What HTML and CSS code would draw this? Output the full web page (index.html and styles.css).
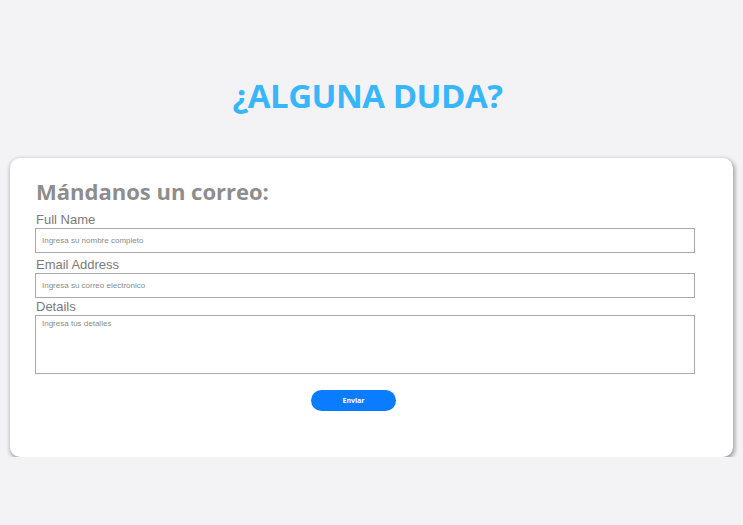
FILE: index.html
```html
<!DOCTYPE html>
<html lang="es">
<head>
<meta charset="utf-8">
<title>Contacto</title>
<link rel="stylesheet" href="styles.css">
</head>
<body>
<h1 class="title">¿ALGUNA DUDA?</h1>
<div class="card">
  <h2 class="card-title">Mándanos un correo:</h2>
  <form class="form">
    <label class="label">Full Name</label>
    <input class="field" type="text" placeholder="Ingresa su nombre completo">
    <label class="label">Email Address</label>
    <input class="field" type="text" placeholder="Ingresa su correo electronico">
    <label class="label label-tight">Details</label>
    <textarea class="field area" placeholder="Ingresa tus detalles"></textarea>
    <div class="actions"><button class="btn" type="button">Enviar</button></div>
  </form>
</div>
</body>
</html>
```

FILE: styles.css
```css
html, body { margin: 0; padding: 0; }
body {
  background: #f3f3f5;
  font-family: "Liberation Sans", Arial, sans-serif;
  padding: 1px 10px 0;
}
.title {
  margin: 73px 0 0;
  padding-right: 8px;
  text-align: center;
  font-family: "Open Sans", "Noto Sans", sans-serif;
  font-weight: 700;
  font-size: 33px;
  line-height: 44px;
  color: #38b6fb;
  letter-spacing: -0.5px;
}
.card {
  margin-top: 40px;
  background: #fff;
  border-radius: 10px;
  box-shadow: 1px 2px 4px 1px rgba(0,0,0,0.33);
  padding: 18px 38px 46px 25px;
}
.card-title {
  margin: 0 0 6px 1px;
  font-family: "Open Sans", "Noto Sans", sans-serif;
  font-weight: 700;
  font-size: 22px;
  line-height: 30px;
  color: #8d8d8d;
}
.form { display: flex; flex-direction: column; }
.label {
  font-size: 13px;
  line-height: 16px;
  color: #7a7a7a;
  margin-left: 1px;
}
.label-tight { margin-top: -3px; }
.field {
  box-sizing: border-box;
  width: 100%;
  height: 25px;
  margin: 0 0 4px;
  border: 1px solid #a9a9a9;
  background: #fff;
  padding: 0 6px;
  font-family: "Liberation Sans", Arial, sans-serif;
  font-size: 8px;
  color: #555;
  outline: none;
}
.field::placeholder { color: #8a8a8a; }
.area {
  height: 59px;
  padding: 3px 6px;
  resize: none;
  margin-bottom: 16px;
}
.actions { display: flex; justify-content: center; }
.btn {
  width: 85px;
  height: 21px;
  margin-right: 23px;
  border: none;
  border-radius: 11px;
  background: #0a7cff;
  color: #fff;
  font-family: "Open Sans", "Noto Sans", sans-serif;
  font-weight: 700;
  font-size: 7px;
  padding: 0;
}
```
